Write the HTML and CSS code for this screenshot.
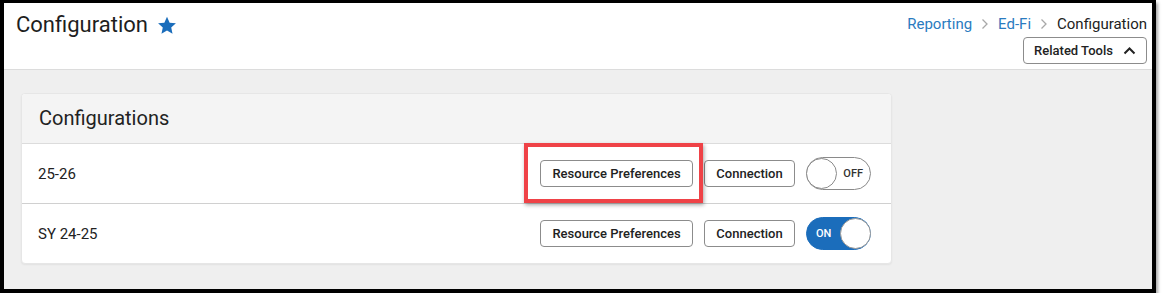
FILE: index.html
```html
<!DOCTYPE html>
<html>
<head>
<meta charset="utf-8">
<link rel="stylesheet" href="styles.css">
</head>
<body>
<div class="frame">
  <header class="page-header">
    <div class="title-wrap">
      <h1 class="title">Configuration</h1>
      <svg class="star" width="20" height="19" viewBox="0 0 24 23"><path d="M12 1l3.2 7.1 7.6.8-5.7 5.1 1.6 7.6L12 17.7l-6.7 3.9 1.6-7.6L1.2 8.9l7.6-.8z" fill="#1b6dbb"/></svg>
    </div>
    <div class="header-right">
      <nav class="crumbs">
        <a class="crumb-link">Reporting</a>
        <svg class="sep" width="8" height="12" viewBox="0 0 8 12"><path d="M1.5 1.5L6 6l-4.5 4.5" fill="none" stroke="#a8a8a8" stroke-width="1.3"/></svg>
        <a class="crumb-link">Ed-Fi</a>
        <svg class="sep" width="8" height="12" viewBox="0 0 8 12"><path d="M1.5 1.5L6 6l-4.5 4.5" fill="none" stroke="#a8a8a8" stroke-width="1.3"/></svg>
        <span class="crumb-current">Configuration</span>
      </nav>
      <button class="related">Related Tools
        <svg width="13" height="9" viewBox="0 0 13 9"><path d="M1.5 7.5l5-5 5 5" fill="none" stroke="#222" stroke-width="2"/></svg>
      </button>
    </div>
  </header>
  <main class="content">
    <section class="card">
      <div class="card-head">Configurations</div>
      <div class="row">
        <span class="row-label">25-26</span>
        <div class="actions">
          <div class="highlight-wrap">
            <button class="btn btn-rp">Resource Preferences</button>
            <span class="highlight"></span>
          </div>
          <button class="btn btn-conn">Connection</button>
          <div class="toggle off"><span class="knob"></span><span class="tlabel">OFF</span></div>
        </div>
      </div>
      <div class="row">
        <span class="row-label">SY 24-25</span>
        <div class="actions">
          <button class="btn btn-rp">Resource Preferences</button>
          <button class="btn btn-conn">Connection</button>
          <div class="toggle on"><span class="tlabel">ON</span><span class="knob"></span></div>
        </div>
      </div>
    </section>
  </main>
</div>
</body>
</html>
```

FILE: styles.css
```css
* { box-sizing: border-box; }
html, body { margin: 0; padding: 0; background: #fff; }
body { font-family: Roboto, "Liberation Sans", Arial, sans-serif; color: #222; }

.frame {
  width: 1156px;
  height: 293px;
  border-style: solid;
  border-color: #000;
  border-width: 3px 4px 4px 4px;
  box-shadow: 2px 3px 3px rgba(0,0,0,0.35);
  background: #efefef;
  display: flex;
  flex-direction: column;
}

.page-header {
  height: 67px;
  background: #fff;
  border-bottom: 1px solid #dcdcdc;
  display: flex;
  justify-content: space-between;
  padding: 0 5px 0 12px;
  flex-shrink: 0;
}
.title-wrap { display: flex; align-items: flex-start; padding-top: 8px; }
.title {
  margin: 0;
  font-size: 22px;
  line-height: 28px;
  font-weight: 400;
  color: #1e1e1e;
}
.star { margin-left: 9px; margin-top: 5px; }

.header-right { display: flex; flex-direction: column; align-items: flex-end; padding-top: 11px; }
.crumbs { display: flex; align-items: center; font-size: 15px; line-height: 20px; gap: 10px; }
.crumb-link { color: #2a7bc0; }
.crumb-current { color: #222; }
.sep { margin: 0 -1px; }

.related {
  margin-top: 3px;
  height: 27px;
  width: 124px;
  border: 1px solid #8c8c8c;
  border-radius: 4px;
  background: #fff;
  font-family: inherit;
  font-size: 13px;
  font-weight: 500;
  color: #222;
  display: flex;
  align-items: center;
  justify-content: center;
  gap: 10px;
  padding: 0;
}

.content { padding: 23px 0 0 17px; }

.card {
  width: 871px;
  background: #fff;
  border: 1px solid #e6e6e6;
  border-radius: 4px;
  box-shadow: 0 1px 2px rgba(0,0,0,0.06);
}
.card-head {
  height: 50px;
  line-height: 49px;
  background: #f4f4f4;
  border-bottom: 1px solid #dcdcdc;
  padding-left: 17px;
  font-size: 20px;
  color: #222;
  border-radius: 4px 4px 0 0;
}
.row {
  height: 60px;
  display: flex;
  align-items: center;
  justify-content: space-between;
  padding: 0 20px 0 16px;
  border-bottom: 1px solid #d0d0d0;
}
.row:last-child { border-bottom: none; height: 59px; }
.row-label { font-size: 15px; color: #222; }

.actions { display: flex; align-items: center; gap: 11px; }
.btn {
  height: 27px;
  padding: 0;
  border: 1px solid #8c8c8c;
  border-radius: 4px;
  background: #fff;
  font-family: inherit;
  font-size: 13px;
  font-weight: 500;
  color: #222;
  white-space: nowrap;
}
.btn-rp { width: 153px; }
.btn-conn { width: 91px; }

.highlight-wrap { position: relative; display: flex; }
.highlight {
  position: absolute;
  left: -16px;
  top: -17px;
  width: 179px;
  height: 60px;
  border: 4px solid #ef4247;
  box-shadow: 1px 2px 4px rgba(0,0,0,0.35);
  pointer-events: none;
}

.toggle {
  width: 65px;
  height: 33px;
  border-radius: 17px;
  border: 1px solid #8a8a8a;
  display: flex;
  align-items: center;
  font-size: 11px;
  font-weight: 500;
}
.toggle .knob {
  width: 31px;
  height: 31px;
  border-radius: 50%;
  background: #fff;
  border: 1px solid #8a8a8a;
  flex-shrink: 0;
}
.toggle.off { background: #fff; justify-content: space-between; padding-right: 7px; }
.toggle.off .knob { margin-left: -1px; }
.toggle.off .tlabel { color: #333; }
.toggle.on { background: #1b6dbb; border-color: #1b6dbb; justify-content: space-between; padding-left: 9px; }
.toggle.on .knob { margin-right: -1px; border-color: #999; }
.toggle.on .tlabel { color: #fff; }
```
